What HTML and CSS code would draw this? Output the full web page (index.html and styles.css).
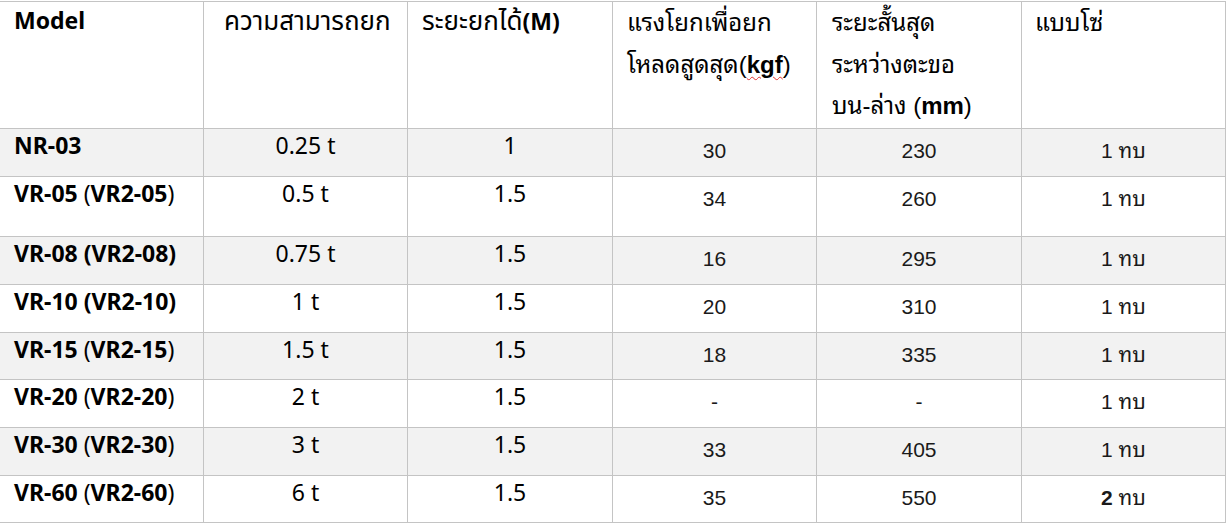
FILE: index.html
```html
<!DOCTYPE html>
<html lang="th">
<head>
<meta charset="utf-8">
<title>Spec table</title>
<link rel="stylesheet" href="styles.css">
</head>
<body>
<div class="sheet">
  <div class="cell hd c1"><b>Model</b></div>
  <div class="cell hd c2"><span class="th">ความสามารถยก</span></div>
  <div class="cell hd c3"><span class="th">ระยะยกได้</span><b>(M)</b></div>
  <div class="cell hd c4 tall">แรงโยกเพื่อยก<br>โหลดสูดสุด(<b class="squig">kgf</b>)</div>
  <div class="cell hd c5 tall">ระยะสั้นสุด<br>ระหว่างตะขอ<br>บน-ล่าง (<b>mm</b>)</div>
  <div class="cell hd c6 tall">แบบโซ่</div>

  <div class="cell m alt"><b>NR-03</b></div>
  <div class="cell v alt">0.25 t</div>
  <div class="cell v alt">1</div>
  <div class="cell n alt">30</div>
  <div class="cell n alt">230</div>
  <div class="cell n alt">1 ทบ</div>

  <div class="cell m"><b>VR-05</b> (<b>VR2-05</b>)</div>
  <div class="cell v">0.5 t</div>
  <div class="cell v">1.5</div>
  <div class="cell n">34</div>
  <div class="cell n">260</div>
  <div class="cell n">1 ทบ</div>

  <div class="cell m alt"><b>VR-08 (VR2-08)</b></div>
  <div class="cell v alt">0.75 t</div>
  <div class="cell v alt">1.5</div>
  <div class="cell n alt">16</div>
  <div class="cell n alt">295</div>
  <div class="cell n alt">1 ทบ</div>

  <div class="cell m"><b>VR-10 (VR2-10)</b></div>
  <div class="cell v">1 t</div>
  <div class="cell v">1.5</div>
  <div class="cell n">20</div>
  <div class="cell n">310</div>
  <div class="cell n">1 ทบ</div>

  <div class="cell m alt"><b>VR-15</b> (<b>VR2-15</b>)</div>
  <div class="cell v alt">1.5 t</div>
  <div class="cell v alt">1.5</div>
  <div class="cell n alt">18</div>
  <div class="cell n alt">335</div>
  <div class="cell n alt">1 ทบ</div>

  <div class="cell m"><b>VR-20</b> (<b>VR2-20</b>)</div>
  <div class="cell v">2 t</div>
  <div class="cell v">1.5</div>
  <div class="cell n">-</div>
  <div class="cell n">-</div>
  <div class="cell n">1 ทบ</div>

  <div class="cell m alt"><b>VR-30</b> (<b>VR2-30</b>)</div>
  <div class="cell v alt">3 t</div>
  <div class="cell v alt">1.5</div>
  <div class="cell n alt">33</div>
  <div class="cell n alt">405</div>
  <div class="cell n alt">1 ทบ</div>

  <div class="cell m"><b>VR-60</b> (<b>VR2-60</b>)</div>
  <div class="cell v">6 t</div>
  <div class="cell v">1.5</div>
  <div class="cell n">35</div>
  <div class="cell n">550</div>
  <div class="cell n"><b class="num">2</b> ทบ</div>
</div>
</body>
</html>
```

FILE: styles.css
```css
html, body {
  margin: 0;
  padding: 0;
  background: #ffffff;
}

body {
  padding-top: 1px;
  color: #000;
}

.sheet {
  display: grid;
  grid-template-columns: 204px 204px 205px 204px 205px 204px;
  grid-template-rows: 127px 48px 60px 48px 48px 47px 48px 48px 47px;
  width: 1226px;
  border-top: 1px solid #c4c4c4;
}

.cell {
  box-sizing: border-box;
  border-right: 1px solid #c4c4c4;
  border-bottom: 1px solid #c4c4c4;
  overflow: hidden;
  white-space: nowrap;
  font-family: "Noto Sans", "Noto Sans Thai", "Noto Sans Thai UI", "Leelawadee UI", "Tahoma", "Loma", "Garuda", sans-serif;
  font-size: 23px;
  line-height: 28px;
}

.alt {
  background: #f2f2f2;
}

/* header */
.hd {
  padding-top: 4px;
}
.hd.c1 {
  padding-left: 14px;
}
.hd.c2 {
  padding-left: 20px;
}
.hd.c3 {
  padding-left: 14px;
}
.th {
  font-size: 26px;
  line-height: 28px;
}
.tall {
  padding-top: 0;
  padding-left: 14px;
  font-family: "Liberation Sans", "Noto Sans Thai Looped", "Noto Serif Thai", "Kinnari", "Norasi", "Tlwg Typo", sans-serif;
  font-size: 24px;
  line-height: 41.5px;
}
.hd.c5 {
  padding-left: 15px;
}
.hd.c6 {
  padding-left: 13px;
}

.squig {
  text-decoration: underline wavy #e03030;
  text-decoration-thickness: 1px;
  text-underline-offset: 3px;
}

/* model column */
.m {
  padding-left: 14px;
  padding-top: 2px;
}
.m b {
  font-weight: 700;
}

/* capacity / lift columns */
.v {
  text-align: center;
  padding-top: 2px;
}

/* numeric columns */
.n {
  text-align: center;
  padding-top: 8px;
  font-family: "Liberation Sans", "Noto Sans Thai Looped", "Loma", "Garuda", sans-serif;
  font-size: 21px;
  color: #1a1a1a;
}
.num {
  font-weight: 700;
}
```
